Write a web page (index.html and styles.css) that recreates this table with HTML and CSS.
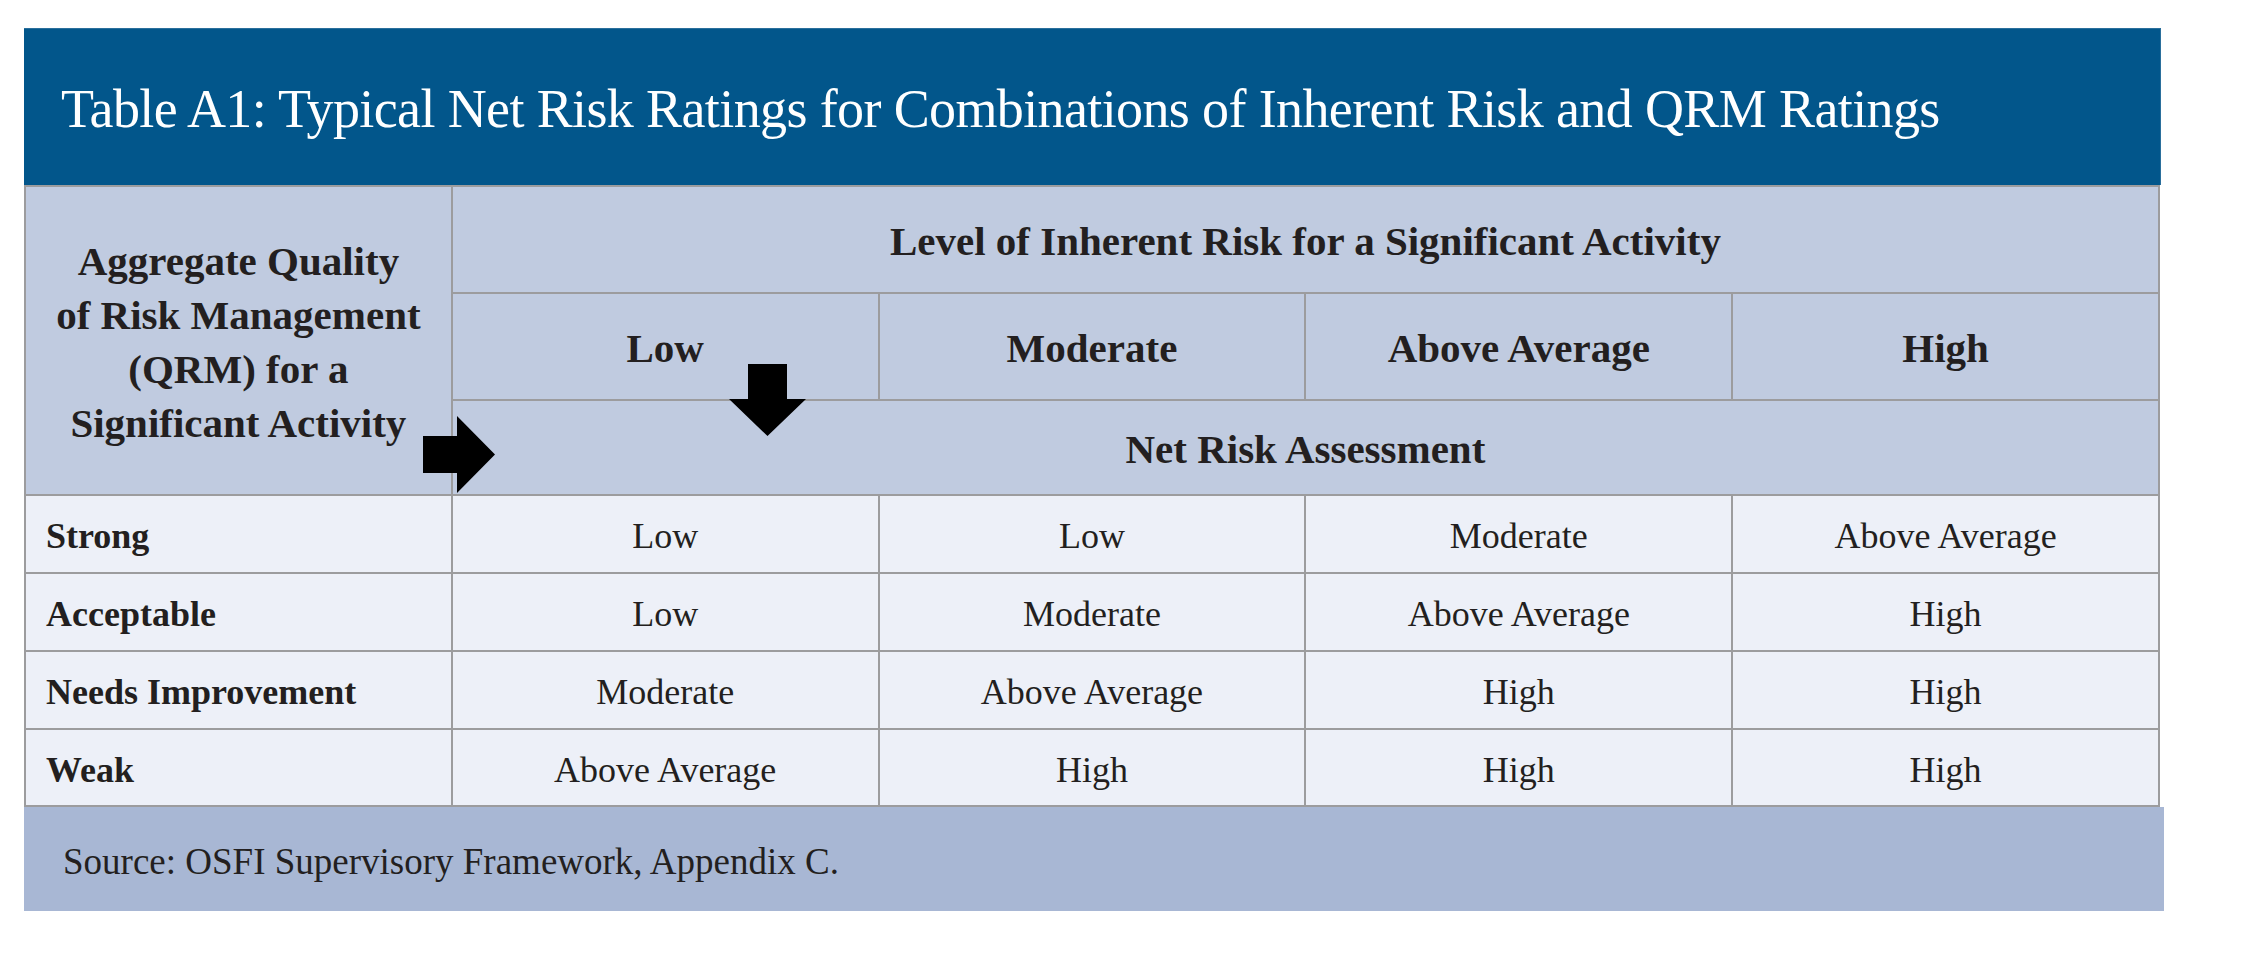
FILE: index.html
```html
<!DOCTYPE html>
<html lang="en">
<head>
<meta charset="utf-8">
<title>Table A1</title>
<link rel="stylesheet" href="styles.css">
</head>
<body>
<div class="page">
  <div class="figure">
    <div class="title-bar">
      <h1 class="title">Table A1: Typical Net Risk Ratings for Combinations of Inherent Risk and QRM Ratings</h1>
    </div>
    <div class="grid">
      <div class="cell head corner">Aggregate Quality<br>of Risk Management<br>(QRM) for a<br>Significant Activity</div>
      <div class="cell head span4">Level of Inherent Risk for a Significant Activity</div>
      <div class="cell head">Low</div>
      <div class="cell head">Moderate</div>
      <div class="cell head">Above Average</div>
      <div class="cell head">High</div>
      <div class="cell head span4">Net Risk Assessment</div>

      <div class="cell label">Strong</div>
      <div class="cell data">Low</div>
      <div class="cell data">Low</div>
      <div class="cell data">Moderate</div>
      <div class="cell data">Above Average</div>

      <div class="cell label">Acceptable</div>
      <div class="cell data">Low</div>
      <div class="cell data">Moderate</div>
      <div class="cell data">Above Average</div>
      <div class="cell data">High</div>

      <div class="cell label">Needs Improvement</div>
      <div class="cell data">Moderate</div>
      <div class="cell data">Above Average</div>
      <div class="cell data">High</div>
      <div class="cell data">High</div>

      <div class="cell label">Weak</div>
      <div class="cell data">Above Average</div>
      <div class="cell data">High</div>
      <div class="cell data">High</div>
      <div class="cell data">High</div>

      <svg class="arrows" width="2136" height="330" viewBox="0 0 2136 330" aria-hidden="true">
        <polygon points="399,251 433,251 433,231 471,269.5 433,308 433,288 399,288" fill="#000"/>
        <polygon points="724,179 763,179 763,214 782,214 743.5,251 705,214 724,214" fill="#000"/>
      </svg>
    </div>
    <div class="source">Source: OSFI Supervisory Framework, Appendix C.</div>
  </div>
</div>
</body>
</html>
```

FILE: styles.css
```css
html, body {
  margin: 0;
  padding: 0;
  background: #ffffff;
}

.page {
  padding: 28px 0 0 24px;
  font-family: "Liberation Serif", "Times New Roman", serif;
  color: #231f20;
}

.figure {
  display: flex;
  flex-direction: column;
  align-items: flex-start;
}

.title-bar {
  width: 2137px;
  height: 157px;
  box-sizing: border-box;
  background: #02568b;
  border-top: 1px solid #2a6f9c;
  border-right: 1px solid #2a6f9c;
  display: flex;
  align-items: center;
  padding-left: 37px;
}

.title {
  margin: 0;
  font-weight: normal;
  font-size: 54px;
  letter-spacing: -0.62px;
  color: #ffffff;
  line-height: 1;
  white-space: nowrap;
  padding-top: 4px;
}

.grid {
  position: relative;
  width: 2136px;
  box-sizing: border-box;
  display: grid;
  grid-template-columns: repeat(5, 1fr);
  grid-template-rows: 105px 105px 93px 76px 76px 76px 75px;
  gap: 2px;
  padding: 2px;
  background: #9c9c9e;
}

.cell {
  display: flex;
  align-items: center;
  justify-content: center;
  text-align: center;
  box-sizing: border-box;
}

.head {
  background: #c0cbe0;
  font-weight: bold;
  font-size: 41px;
  line-height: 54px;
  padding-top: 2px;
}

.corner {
  grid-row: 1 / span 3;
  font-size: 41px;
  padding-top: 3px;
}

.span4 {
  grid-column: span 4;
}

.label {
  background: #edf0f8;
  justify-content: flex-start;
  padding-left: 20px;
  padding-top: 4px;
  font-weight: bold;
  font-size: 36px;
}

.data {
  background: #edf0f8;
  font-size: 36px;
  padding-top: 4px;
}

.arrows {
  position: absolute;
  left: 0;
  top: 0;
  pointer-events: none;
}

.source {
  width: 2140px;
  height: 104px;
  box-sizing: border-box;
  background: #a8b7d4;
  display: flex;
  align-items: center;
  padding-left: 39px;
  padding-top: 4px;
  font-size: 37px;
}
```
